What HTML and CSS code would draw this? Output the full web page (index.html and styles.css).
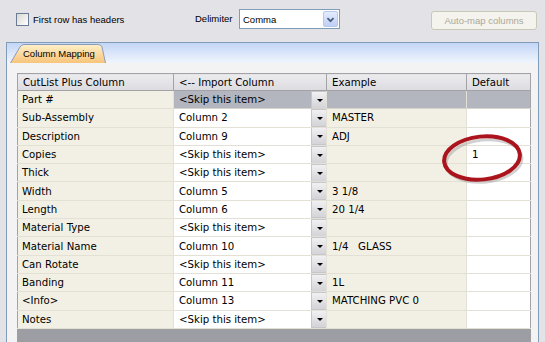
FILE: index.html
```html
<!DOCTYPE html>
<html lang="en">
<head>
    <meta charset="UTF-8">
    <title>Column Mapping</title>
    <link rel="stylesheet" href="styles.css">
</head>
<body>
    <div class="toolbar">
        <label class="check"><span class="box"></span>First row has headers</label>
        <span class="delim-label">Delimiter</span>
        <div class="select">
            <span class="select-text">Comma</span>
            <span class="select-btn">
                <svg width="15" height="17" viewBox="0 0 15 17"><path d="M4 7 L7.5 10.5 L11 7" fill="none" stroke="#4a5c7e" stroke-width="2"/></svg>
            </span>
        </div>
        <button class="automap" disabled>Auto-map columns</button>
    </div>
    <div class="panel">
        <div class="tabstrip">
            <div class="tab">
                <svg class="tab-shape" width="96" height="19" viewBox="0 0 96 19">
                    <defs>
                        <linearGradient id="tabfill" x1="0" y1="0" x2="0" y2="1">
                            <stop offset="0" stop-color="#fff0c8"/>
                            <stop offset="1" stop-color="#f8c47a"/>
                        </linearGradient>
                    </defs>
                    <path d="M0.5 19 L10 3 Q11.5 0.5 14 0.5 L88 0.5 Q91 0.5 92 3 L95.5 19" fill="url(#tabfill)" stroke="#8c9bb8"/>
                </svg>
                <span class="tab-text">Column Mapping</span>
            </div>
        </div>
        <div class="panel-body">
            <div class="grid">
                <table>
                    <colgroup>
                        <col class="c1"><col class="c2"><col class="c3"><col class="c4">
                    </colgroup>
                    <thead>
                        <tr>
                            <th>CutList Plus Column</th>
                            <th>&lt;-- Import Column</th>
                            <th>Example</th>
                            <th>Default</th>
                        </tr>
                    </thead>
                    <tbody>
                        <tr class="selected">
                            <td class="name">Part #</td>
                            <td class="imp"><div class="cellbox"><span>&lt;Skip this item&gt;</span><span class="dd"></span></div></td>
                            <td class="ex"></td>
                            <td class="def"></td>
                        </tr>
                        <tr>
                            <td class="name">Sub-Assembly</td>
                            <td class="imp"><div class="cellbox"><span>Column 2</span><span class="dd"></span></div></td>
                            <td class="ex">MASTER</td>
                            <td class="def"></td>
                        </tr>
                        <tr>
                            <td class="name">Description</td>
                            <td class="imp"><div class="cellbox"><span>Column 9</span><span class="dd"></span></div></td>
                            <td class="ex">ADJ</td>
                            <td class="def"></td>
                        </tr>
                        <tr>
                            <td class="name">Copies</td>
                            <td class="imp"><div class="cellbox"><span>&lt;Skip this item&gt;</span><span class="dd"></span></div></td>
                            <td class="ex"></td>
                            <td class="def">1</td>
                        </tr>
                        <tr>
                            <td class="name">Thick</td>
                            <td class="imp"><div class="cellbox"><span>&lt;Skip this item&gt;</span><span class="dd"></span></div></td>
                            <td class="ex"></td>
                            <td class="def"></td>
                        </tr>
                        <tr>
                            <td class="name">Width</td>
                            <td class="imp"><div class="cellbox"><span>Column 5</span><span class="dd"></span></div></td>
                            <td class="ex">3 1/8</td>
                            <td class="def"></td>
                        </tr>
                        <tr>
                            <td class="name">Length</td>
                            <td class="imp"><div class="cellbox"><span>Column 6</span><span class="dd"></span></div></td>
                            <td class="ex">20 1/4</td>
                            <td class="def"></td>
                        </tr>
                        <tr>
                            <td class="name">Material Type</td>
                            <td class="imp"><div class="cellbox"><span>&lt;Skip this item&gt;</span><span class="dd"></span></div></td>
                            <td class="ex"></td>
                            <td class="def"></td>
                        </tr>
                        <tr>
                            <td class="name">Material Name</td>
                            <td class="imp"><div class="cellbox"><span>Column 10</span><span class="dd"></span></div></td>
                            <td class="ex">1/4&nbsp;&nbsp; GLASS</td>
                            <td class="def"></td>
                        </tr>
                        <tr>
                            <td class="name">Can Rotate</td>
                            <td class="imp"><div class="cellbox"><span>&lt;Skip this item&gt;</span><span class="dd"></span></div></td>
                            <td class="ex"></td>
                            <td class="def"></td>
                        </tr>
                        <tr>
                            <td class="name">Banding</td>
                            <td class="imp"><div class="cellbox"><span>Column 11</span><span class="dd"></span></div></td>
                            <td class="ex">1L</td>
                            <td class="def"></td>
                        </tr>
                        <tr>
                            <td class="name">&lt;Info&gt;</td>
                            <td class="imp"><div class="cellbox"><span>Column 13</span><span class="dd"></span></div></td>
                            <td class="ex">MATCHING PVC 0</td>
                            <td class="def"></td>
                        </tr>
                        <tr>
                            <td class="name">Notes</td>
                            <td class="imp"><div class="cellbox"><span>&lt;Skip this item&gt;</span><span class="dd"></span></div></td>
                            <td class="ex"></td>
                            <td class="def"></td>
                        </tr>
                    </tbody>
                </table>
                <svg class="circle" width="92" height="56" viewBox="0 0 92 56">
                    <ellipse cx="47" cy="30" rx="38" ry="21" fill="none" stroke="#9a9a9a" stroke-width="3" opacity="0.45" transform="rotate(-6 47 30)"/>
                    <ellipse cx="45" cy="27" rx="38" ry="21.5" fill="none" stroke="#ab141c" stroke-width="4" transform="rotate(-6 45 27)"/>
                </svg>
            </div>
        </div>
    </div>
</body>
</html>
```

FILE: styles.css
```css
body {
    margin: 0;
    height: 342px;
    overflow: hidden;
    background-color: #e3e2e7;
    font-family: 'Liberation Sans', Arial, sans-serif;
    font-size: 9.5px;
    color: #000;
    display: flex;
    flex-direction: column;
}
.toolbar {
    height: 33px;
    padding: 9px 0 0 16px;
    display: flex;
    align-items: flex-start;
}
.check {
    width: 179px;
    height: 20px;
    display: flex;
    align-items: center;
}
.box {
    width: 11px;
    height: 11px;
    border: 1px solid #6a7c95;
    background: linear-gradient(135deg, #d8d8d2, #ffffff);
    margin-right: 4px;
}
.delim-label {
    width: 44px;
    height: 20px;
    line-height: 20px;
}
.select {
    width: 99px;
    height: 18px;
    border: 1px solid #7f9db9;
    background-color: #fff;
    display: flex;
    align-items: center;
    justify-content: space-between;
}
.select-text {
    padding-left: 3px;
}
.select-btn {
    width: 15px;
    height: 16px;
    margin-right: 1px;
    border: 1px solid #b7c8ea;
    border-radius: 2px;
    background: linear-gradient(#e4ecfd, #bfd0f5);
    box-sizing: border-box;
    display: flex;
    align-items: center;
    justify-content: center;
}
.select-btn svg {
    display: block;
}
.automap {
    margin: 2px 8px 0 auto;
    width: 106px;
    height: 19px;
    padding: 0;
    border: 1px solid #cac8bb;
    border-radius: 3px;
    background-color: #f4f3ee;
    color: #aca899;
    font-family: 'Liberation Sans', Arial, sans-serif;
    font-size: 9.5px;
}
.panel {
    flex: 1;
    margin: 0 6px;
    border: 1px solid #7f9db9;
    border-bottom: none;
    background-color: #f3f3f3;
    display: flex;
    flex-direction: column;
    min-height: 0;
}
.tabstrip {
    height: 20px;
    padding-left: 3px;
    background: linear-gradient(#c3d6f6, #f0f5fd);
    display: flex;
    align-items: flex-end;
}
.tab {
    position: relative;
    width: 96px;
    height: 19px;
}
.tab-shape {
    position: absolute;
    left: 0;
    top: 0;
}
.tab-text {
    position: relative;
    display: block;
    padding-left: 13px;
    line-height: 19px;
    font-size: 9.5px;
}
.panel-body {
    flex: 1;
    padding: 10px 7px 0 10px;
    min-height: 0;
}
.grid {
    position: relative;
    height: 100%;
    background-color: #9d9ea3;
}
table {
    border-collapse: collapse;
    table-layout: fixed;
    width: 513px;
    font-family: 'DejaVu Sans', Verdana, sans-serif;
    font-size: 10.2px;
}
col.c1 { width: 156px; }
col.c2 { width: 153px; }
col.c3 { width: 140px; }
col.c4 { width: 64px; }
th {
    height: 16px;
    padding: 0 0 0 5px;
    text-align: left;
    font-weight: normal;
    background: linear-gradient(#ececef, #dcdce0);
    border: 1px solid #a3a3a7;
    white-space: nowrap;
    overflow: hidden;
}
td {
    height: 17.3px;
    padding: 0 0 0 5px;
    border-bottom: 1px solid #e3e1d6;
    border-right: 1px solid #e3e1d6;
    white-space: nowrap;
    overflow: hidden;
}
td.name {
    padding-left: 4px;
    background-color: #f2f0e5;
    border-left: 1px solid #a3a3a7;
}
td.imp {
    background-color: #fff;
    padding-right: 0;
}
td.ex {
    background-color: #f2f0e5;
}
td.def {
    background-color: #fff;
    border-right: 1px solid #a3a3a7;
}
tr.selected td.imp,
tr.selected td.ex,
tr.selected td.def {
    background-color: #b3b5bf;
    border-bottom-color: #d6d4cc;
}
.cellbox {
    display: flex;
    align-items: center;
    justify-content: space-between;
    height: 17px;
}
.dd {
    position: relative;
    width: 14px;
    height: 16px;
    border: 1px solid #c7c7cb;
    border-right: none;
    background: linear-gradient(#f1f1f3, #d3d3d8);
}
.dd::after {
    content: "";
    position: absolute;
    left: 5px;
    top: 7px;
    border-left: 3px solid transparent;
    border-right: 3px solid transparent;
    border-top: 3px solid #000;
}
.circle {
    position: absolute;
    left: 420px;
    top: 58px;
}
```
